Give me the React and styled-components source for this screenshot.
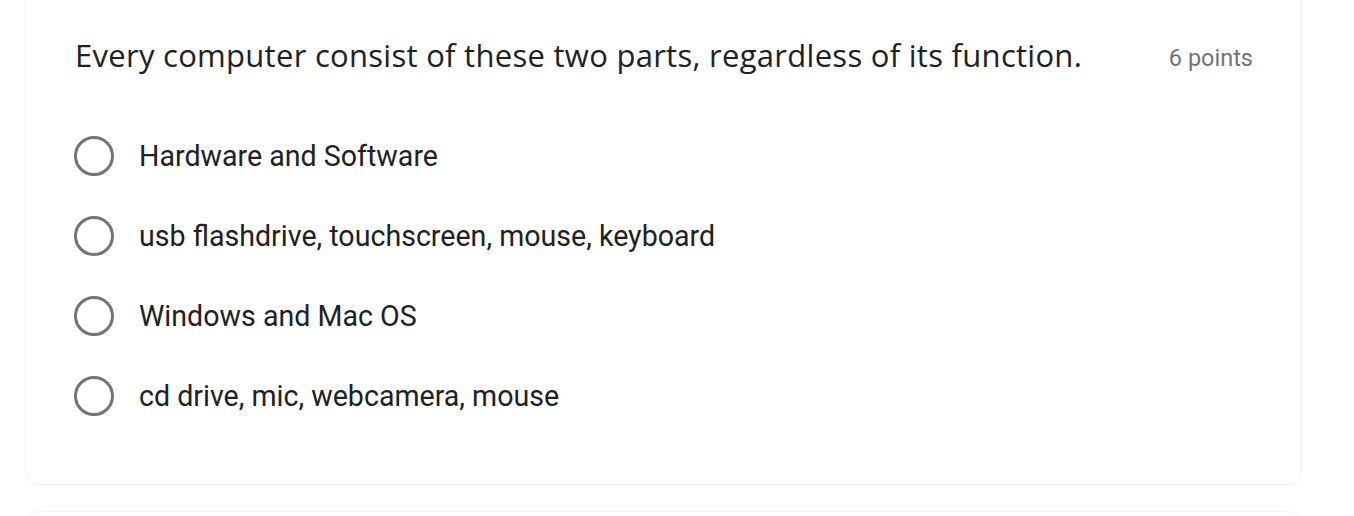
import React from 'react'
import styled, { createGlobalStyle } from 'styled-components'

const GlobalStyle = createGlobalStyle`
    body {
        margin: 0;
        background-color: #ffffff;
        font-family: Roboto, "Liberation Sans", sans-serif;
    }
`

const Page = styled.div`
    padding: 0 52px 0 25px;
    display: flex;
    flex-direction: column;
    gap: 26px;
    margin-top: -20px;
`

const Card = styled.div`
    background-color: #ffffff;
    border: 1px solid #f7f4e3;
    border-radius: 14px;
    padding: 53px 48px 48px 48px;
    min-height: ${(p) => (p.$empty ? '40px' : 'auto')};
`

const QuestionHeader = styled.div`
    display: flex;
    justify-content: space-between;
    align-items: center;
`

const QuestionTitle = styled.div`
    font-family: "Open Sans", sans-serif;
    font-size: 31px;
    letter-spacing: 0.28px;
    color: #202124;
    margin-left: 1px;
`

const Points = styled.div`
    font-size: 23.5px;
    color: #70757a;
    margin-top: 6px;
`

const OptionList = styled.div`
    display: flex;
    flex-direction: column;
    margin-top: 40px;
`

const OptionRow = styled.label`
    display: flex;
    align-items: center;
    gap: 25px;
    height: 80px;
`

const Radio = styled.span`
    width: 34px;
    height: 34px;
    border: 3px solid #70757a;
    border-radius: 50%;
    box-sizing: content-box;
    flex-shrink: 0;
`

const OptionText = styled.span`
    font-size: 28.6px;
    color: #202124;
`

const options = [
    'Hardware and Software',
    'usb flashdrive, touchscreen, mouse, keyboard',
    'Windows and Mac OS',
    'cd drive, mic, webcamera, mouse',
]

const App = () => {
  return (
    <>
        <GlobalStyle />
        <Page>
            <Card>
                <QuestionHeader>
                    <QuestionTitle>Every computer consist of these two parts, regardless of its function.</QuestionTitle>
                    <Points>6 points</Points>
                </QuestionHeader>
                <OptionList>
                    {options.map((opt) => (
                        <OptionRow key={opt}>
                            <Radio />
                            <OptionText>{opt}</OptionText>
                        </OptionRow>
                    ))}
                </OptionList>
            </Card>
            <Card $empty />
        </Page>
    </>
  )
}

export default App
